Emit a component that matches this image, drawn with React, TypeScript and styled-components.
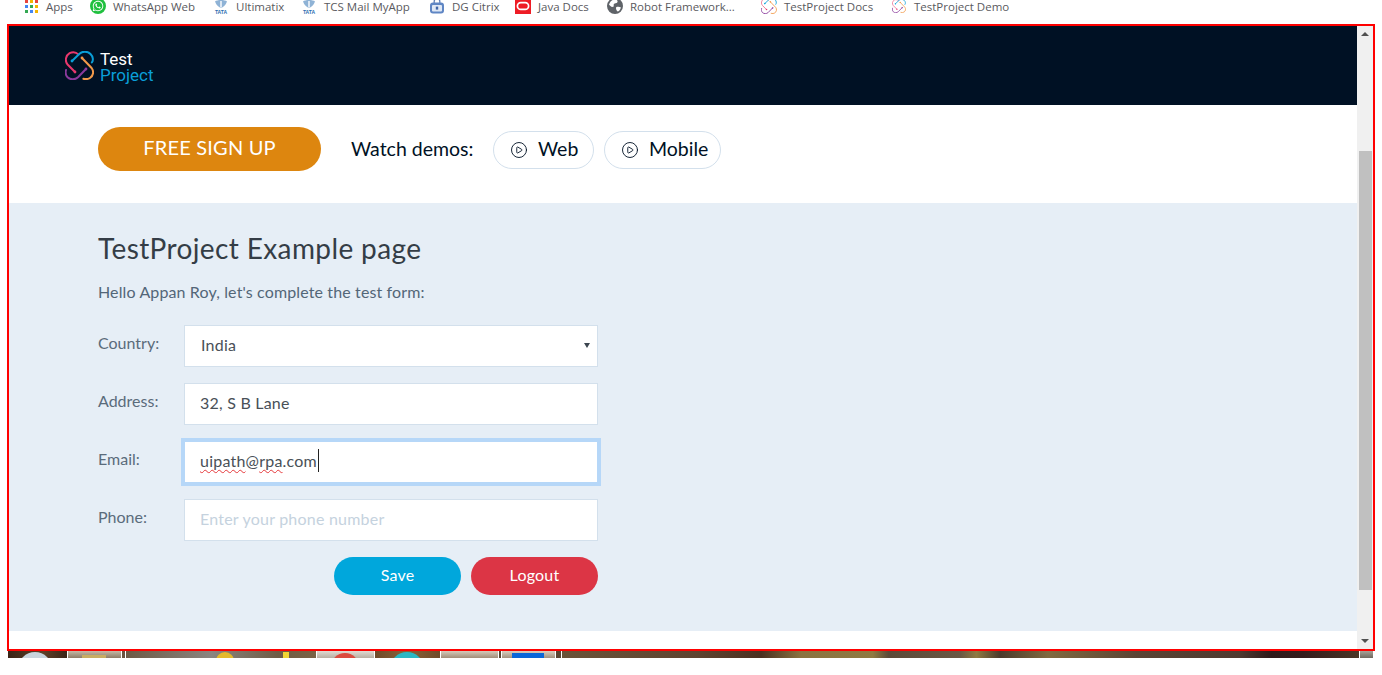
import React from "react";
import styled, { createGlobalStyle } from "styled-components";
import { CirclePlay } from "lucide-react";
import { FaWhatsapp } from "react-icons/fa";

const Global = createGlobalStyle`
  html, body { margin: 0; padding: 0; background: #fff; }
  body { font-family: "Lato", "Noto Sans", sans-serif; overflow: hidden; }
  * { box-sizing: border-box; }
`;

const Page = styled.div`
  width: 1382px;
  height: 675px;
  overflow: hidden;
`;

const BookmarkBar = styled.nav`
  height: 24px;
  padding: 0 0 12px 23px;
  display: flex;
  align-items: center;
  font-family: "Open Sans", "Noto Sans", sans-serif;
  font-size: 11.5px;
  color: #5a5a5e;
`;

const Bookmark = styled.a<{ $w: number }>`
  width: ${(p) => p.$w}px;
  display: flex;
  align-items: center;
  gap: 7px;
  white-space: nowrap;
  flex: none;
`;

const IconBox = styled.span`
  width: 16px;
  height: 16px;
  flex: none;
  display: flex;
  align-items: center;
  justify-content: center;
`;

const AppsGrid = styled.span`
  display: grid;
  grid-template-columns: repeat(3, 3px);
  grid-auto-rows: 3px;
  gap: 2px;
`;

const Dot = styled.i<{ $c: string }>`
  display: block;
  background: ${(p) => p.$c};
`;

const WhatsBadge = styled.span`
  width: 16px;
  height: 16px;
  border-radius: 50%;
  background: #20c03f;
  color: #fff;
  display: flex;
  align-items: center;
  justify-content: center;
  font-size: 12px;
`;

const Frame = styled.div`
  margin-left: 7px;
  width: 1368px;
  height: 627px;
  border: 2px solid #f00;
  display: flex;
`;

const Main = styled.main`
  flex: 1;
  min-width: 0;
  background: #fff;
`;

const Header = styled.header`
  height: 79px;
  background: #001124;
  display: flex;
  align-items: center;
  gap: 6px;
  padding: 0 0 0 56px;
`;

const Wordmark = styled.div`
  margin-top: 3px;
  font-family: "Roboto", sans-serif;
  font-size: 17px;
  line-height: 16px;
  color: #fff;
`;

const WordmarkAccent = styled.span`
  display: block;
  color: #0a9fd8;
`;

const ActionBar = styled.section`
  height: 98px;
  padding: 22px 0 0 89px;
  display: flex;
  align-items: flex-start;
`;

const SignUp = styled.button`
  width: 223px;
  height: 44px;
  border: 0;
  border-radius: 22px;
  background: #dd860f;
  color: #fff;
  font: inherit;
  font-size: 20px;
  letter-spacing: 0.2px;
  padding: 0 0 4px;
`;

const WatchLabel = styled.span`
  width: 142px;
  flex: none;
  margin: 8px 0 0 30px;
  font-size: 19.5px;
  line-height: 27px;
  color: #001124;
  white-space: nowrap;
`;

const DemoButton = styled.button<{ $w: number }>`
  width: ${(p) => p.$w}px;
  height: 38px;
  margin: 4px 10px 0 0;
  border: 1px solid #d3e0ec;
  border-radius: 19px;
  background: #fff;
  color: #001124;
  font: inherit;
  font-size: 19.5px;
  display: flex;
  align-items: center;
  gap: 10px;
  padding: 0 0 3px 16px;
`;

const DemoIcon = styled(CirclePlay)`
  margin-top: 3px;
  flex: none;
`;

const FormSection = styled.section`
  height: 428px;
  background: #e6eef6;
  padding: 27px 0 0 89px;
`;

const Title = styled.h1`
  margin: 0;
  font-size: 28px;
  line-height: 36px;
  font-weight: 400;
  letter-spacing: 0.38px;
  color: #343d46;
`;

const Hello = styled.p`
  margin: 16px 0 23px;
  font-size: 16px;
  line-height: 20px;
  letter-spacing: 0.13px;
  color: #536678;
`;

const Form = styled.form`
  width: 500px;
  display: flex;
  flex-direction: column;
  gap: 16px;
`;

const Row = styled.div`
  display: flex;
  height: 42px;
`;

const Label = styled.label`
  width: 86px;
  flex: none;
  padding-top: 8px;
  font-size: 16px;
  line-height: 20px;
  color: #5a6b7b;
`;

const SelectWrap = styled.div`
  position: relative;
  flex: 1;
  &::after {
    content: "";
    position: absolute;
    right: 8px;
    top: 18px;
    border-left: 3px solid transparent;
    border-right: 3px solid transparent;
    border-top: 5px solid #3c4650;
  }
`;

const fieldStyle = `
  width: 100%;
  height: 42px;
  border: 1px solid #d3e0ec;
  background: #fff;
  font-family: inherit;
  font-size: 16px;
  letter-spacing: 0.22px;
  color: #495057;
  outline: none;
  border-radius: 0;
`;

const Select = styled.select`
  ${fieldStyle}
  appearance: none;
  padding: 0 0 4px 16px;
`;

const Input = styled.input`
  ${fieldStyle}
  flex: 1;
  padding: 0 15px 4px;
  &::placeholder { color: #c5d2de; opacity: 1; }
`;

const FocusedField = styled.div`
  ${fieldStyle}
  flex: 1;
  display: flex;
  align-items: center;
  padding: 0 15px 4px;
  border-color: #b6d7f8;
  box-shadow: 0 0 0 3px #b6d7f8;
`;

const Misspelt = styled.span`
  text-decoration: underline wavy #e5383b 1px;
  text-decoration-skip-ink: none;
  text-underline-offset: 2px;
`;

const Caret = styled.i`
  display: block;
  width: 1px;
  height: 23px;
  margin-left: 1px;
  background: #222;
`;

const Actions = styled.div`
  display: flex;
  justify-content: flex-end;
  gap: 10px;
`;

const Pill = styled.button<{ $bg: string }>`
  width: 127px;
  height: 38px;
  border: 0;
  border-radius: 19px;
  background: ${(p) => p.$bg};
  color: #fff;
  font: inherit;
  font-size: 16px;
  letter-spacing: 0.2px;
  padding: 0 0 4px;
`;

const Scrollbar = styled.aside`
  width: 16px;
  flex: none;
  background: #f0f0f0;
  padding-top: 6px;
  display: flex;
  flex-direction: column;
  align-items: center;
`;

const ArrowUp = styled.i`
  display: block;
  border-left: 4px solid transparent;
  border-right: 4px solid transparent;
  border-bottom: 4px solid #505050;
`;

const ArrowDown = styled.i`
  display: block;
  margin-top: 49px;
  border-left: 4px solid transparent;
  border-right: 4px solid transparent;
  border-top: 4px solid #505050;
`;

const Thumb = styled.div`
  width: 13px;
  height: 439px;
  margin-top: 115px;
  background: #c0c0c0;
`;

const Taskbar = styled.div`
  margin-left: 8px;
  width: 1365px;
  height: 7px;
  display: flex;
  gap: 1px;
  overflow: hidden;
`;

const TaskSlot = styled.div<{ $w?: number; $bg: string }>`
  width: ${(p) => (p.$w ? `${p.$w}px` : "auto")};
  flex: ${(p) => (p.$w ? "none" : "1")};
  background: ${(p) => p.$bg};
  display: flex;
  align-items: flex-start;
`;

const TaskGlyph = styled.i<{ $x: number; $w: number; $c: string; $round?: boolean; $dy: number }>`
  display: block;
  flex: none;
  margin-left: ${(p) => p.$x}px;
  margin-top: ${(p) => p.$dy}px;
  width: ${(p) => p.$w}px;
  height: ${(p) => p.$w}px;
  background: ${(p) => p.$c};
  border-radius: ${(p) => (p.$round ? "50%" : "0")};
`;

const Tata = () => (
  <svg width="16" height="16" viewBox="0 0 16 16">
    <path d="M2 3.5C4 1.5 12 1.5 14 3.5C12.5 7.5 10 9.5 8 10C6 9.5 3.5 7.5 2 3.5Z" fill="#8fb3d6" />
    <path d="M7.3 3h1.4v6.5H7.3z" fill="#fff" />
    <text x="8" y="15.5" textAnchor="middle" fontSize="5" fontWeight="700" fontFamily="Liberation Sans" fill="#2a6db0">TATA</text>
  </svg>
);

const Lock = () => (
  <svg width="16" height="16" viewBox="0 0 16 16">
    <path d="M5.2 6V3.6a2.8 2.8 0 0 1 5.6 0V6" fill="none" stroke="#5f7fb5" strokeWidth="1.3" />
    <rect x="1" y="4.5" width="14" height="11" rx="3" fill="#5f86c4" />
    <rect x="3" y="7" width="10" height="6.5" rx="1" fill="#dfe8f5" />
    <rect x="6.8" y="8.6" width="2.4" height="3" fill="#3f66a8" />
  </svg>
);

const Oracle = () => (
  <svg width="16" height="16" viewBox="0 0 16 16">
    <rect width="16" height="16" fill="#ee1c25" />
    <rect x="2.4" y="4.6" width="11.2" height="6.8" rx="3.4" fill="none" stroke="#fff" strokeWidth="1.7" />
  </svg>
);

const GlobeMark = () => (
  <svg width="16" height="16" viewBox="0 0 16 16">
    <circle cx="8" cy="8" r="8" fill="#5f6368" />
    <path d="M8 1.2C10 1.6 11 2.8 10.4 4.2 9.6 5.4 7.6 5 6.8 6.2 6.2 7.4 7.4 8 6.2 8.8 4.6 9.4 2.8 8 2 6.6 3 3.6 5.2 1.6 8 1.2Z" fill="#fff" />
    <path d="M9.4 9c1.4-.6 3-.4 4.4.2-.2 2-1.4 3.6-3 4.4-1.2-.6-2.4-3.6-1.4-4.6Z" fill="#fff" />
  </svg>
);

const TpMark = ({ size, soft }: { size: number; soft?: boolean }) => (
  <svg width={size} height={size} viewBox="0 0 29 29" fill="none" strokeWidth={soft ? 1.6 : 2} strokeLinecap="round">
    <path d="M10 21L2.6 13.5C-.4 10 .6 4.6 4.6 2.2 7.6.6 11 1 13.6 3.6" stroke={soft ? "#ef6f8f" : "#e8386d"} />
    <path d="M7 10l7.5-7.3c3-2.7 8-2.7 11 .3 2.6 2.6 3 6.4 1.4 8.4" stroke="#0a9fd8" />
    <path d="M17 7l9.6 10c2.6 3.4 1.6 8-1.6 10-2 1.2-4.2 1.4-6.6.8" stroke="#f29a4a" />
    <path d="M21 18l-8 8.3c-3 2.7-7.6 2.7-10.4 0C.8 24.4.2 21.6 1 19" stroke="#8a3a9c" />
    <circle cx="10" cy="21" r="1.4" fill="#e8386d" />
    <circle cx="7" cy="10" r="1.4" fill="#0a9fd8" />
    <circle cx="17" cy="7" r="1.4" fill="#f29a4a" />
    <circle cx="21" cy="18" r="1.4" fill="#8a3a9c" />
  </svg>
);

const appColors = ["#e8453c", "#f4b400", "#e8453c", "#4285f4", "#34a853", "#f4b400", "#34a853", "#4285f4", "#f4b400"];

export default function App() {
  return (
    <Page>
      <Global />
      <BookmarkBar>
        <Bookmark $w={67}>
          <IconBox>
            <AppsGrid>
              {appColors.map((c, i) => (
                <Dot key={i} $c={c} />
              ))}
            </AppsGrid>
          </IconBox>
          Apps
        </Bookmark>
        <Bookmark $w={123}>
          <IconBox>
            <WhatsBadge>
              <FaWhatsapp />
            </WhatsBadge>
          </IconBox>
          WhatsApp Web
        </Bookmark>
        <Bookmark $w={88}>
          <IconBox>
            <Tata />
          </IconBox>
          Ultimatix
        </Bookmark>
        <Bookmark $w={128}>
          <IconBox>
            <Tata />
          </IconBox>
          TCS Mail MyApp
        </Bookmark>
        <Bookmark $w={86}>
          <IconBox>
            <Lock />
          </IconBox>
          DG Citrix
        </Bookmark>
        <Bookmark $w={92}>
          <IconBox>
            <Oracle />
          </IconBox>
          Java Docs
        </Bookmark>
        <Bookmark $w={154}>
          <IconBox>
            <GlobeMark />
          </IconBox>
          Robot Framework...
        </Bookmark>
        <Bookmark $w={130}>
          <IconBox>
            <TpMark size={16} soft />
          </IconBox>
          TestProject Docs
        </Bookmark>
        <Bookmark $w={130}>
          <IconBox>
            <TpMark size={14} soft />
          </IconBox>
          TestProject Demo
        </Bookmark>
      </BookmarkBar>

      <Frame>
        <Main>
          <Header>
            <TpMark size={29} />
            <Wordmark>
              Test
              <WordmarkAccent>Project</WordmarkAccent>
            </Wordmark>
          </Header>

          <ActionBar>
            <SignUp type="button">FREE SIGN UP</SignUp>
            <WatchLabel>Watch demos:</WatchLabel>
            <DemoButton type="button" $w={101}>
              <DemoIcon size={18} strokeWidth={1.2} />
              Web
            </DemoButton>
            <DemoButton type="button" $w={117}>
              <DemoIcon size={18} strokeWidth={1.2} />
              Mobile
            </DemoButton>
          </ActionBar>

          <FormSection>
            <Title>TestProject Example page</Title>
            <Hello>Hello Appan Roy, let's complete the test form:</Hello>
            <Form>
              <Row>
                <Label>Country:</Label>
                <SelectWrap>
                  <Select defaultValue="India">
                    <option>India</option>
                  </Select>
                </SelectWrap>
              </Row>
              <Row>
                <Label>Address:</Label>
                <Input defaultValue="32, S B Lane" />
              </Row>
              <Row>
                <Label>Email:</Label>
                <FocusedField>
                  <Misspelt>uipath</Misspelt>@<Misspelt>rpa</Misspelt>.com
                  <Caret />
                </FocusedField>
              </Row>
              <Row>
                <Label>Phone:</Label>
                <Input placeholder="Enter your phone number" />
              </Row>
              <Actions>
                <Pill type="button" $bg="#00a7dc">Save</Pill>
                <Pill type="button" $bg="#dc3545">Logout</Pill>
              </Actions>
            </Form>
          </FormSection>
        </Main>
        <Scrollbar>
          <ArrowUp />
          <Thumb />
          <ArrowDown />
        </Scrollbar>
      </Frame>

      <Taskbar>
        <TaskSlot $w={59} $bg="linear-gradient(90deg,#3a2416,#5e4028 60%,#3a2416)">
          <TaskGlyph $x={10} $w={34} $c="#c9d4dc" $round $dy={1} />
        </TaskSlot>
        <TaskSlot $w={53} $bg="linear-gradient(180deg,#c4b8a6,#8d7c66)">
          <TaskGlyph $x={14} $w={24} $c="#c9ad62" $dy={4} />
        </TaskSlot>
        <TaskSlot $w={3} $bg="#6a5440" />
        <TaskSlot $w={190} $bg="linear-gradient(90deg,#6d5a45,#8a8580 45%,#6e5c45 80%,#7b6345)">
          <TaskGlyph $x={90} $w={18} $c="#e4b92c" $round $dy={1} />
          <TaskGlyph $x={49} $w={6} $c="#f2d534" $dy={1} />
        </TaskSlot>
        <TaskSlot $w={57} $bg="linear-gradient(180deg,#e0dad2,#b8afa2)">
          <TaskGlyph $x={14} $w={28} $c="#dc4b3e" $round $dy={2} />
        </TaskSlot>
        <TaskSlot $w={65} $bg="linear-gradient(90deg,#6f4a28,#8a6238 50%,#6f4a28)">
          <TaskGlyph $x={15} $w={34} $c="#2bb8c4" $round $dy={1} />
        </TaskSlot>
        <TaskSlot $w={57} $bg="linear-gradient(180deg,#d5cabb,#a28e78)" />
        <TaskSlot $w={2} $bg="#5a4531" />
        <TaskSlot $w={53} $bg="linear-gradient(180deg,#d8cebf,#a3927e)">
          <TaskGlyph $x={10} $w={32} $c="#0a66d8" $dy={2} />
        </TaskSlot>
        <TaskSlot $w={5} $bg="#5a4531" />
        <TaskSlot $bg="linear-gradient(90deg,#6a5338,#5e4430 17%,#4a3020 25%,#8a7340 30%,#8f7a42 39%,#5b4a38 41%,#6a5844 50%,#8f7a42 52%,#4a3a2c 55%,#806a40 61%,#5a4434 72%,#4e3a30 85%,#2e1a1a 89%,#341c1c 93%,#4a3626 100%)" />
        <TaskSlot $w={13} $bg="linear-gradient(180deg,#a8a298,#6f6a60)" />
      </Taskbar>
    </Page>
  );
}
